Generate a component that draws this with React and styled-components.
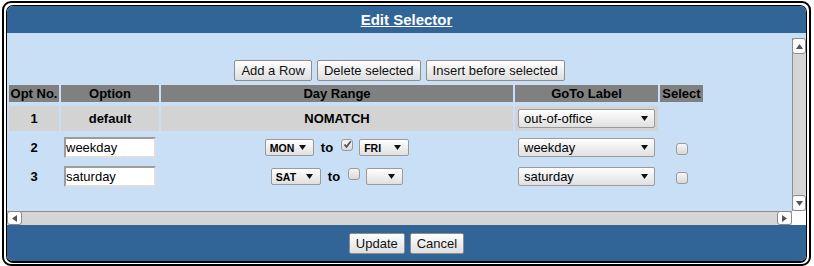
import React from "react";
import styled, { createGlobalStyle } from "styled-components";

const GlobalStyle = createGlobalStyle`
  html, body {
    margin: 0;
    padding: 0;
    background: #ffffff;
  }
  body {
    font-family: "Liberation Sans", Arial, sans-serif;
    font-size: 13px;
    color: #000;
  }
`;

const rows = [
  { no: 2, option: "weekday", from: "MON", fromW: 49, checked: true, to: "FRI", toW: 50, label: "weekday" },
  { no: 3, option: "saturday", from: "SAT", fromW: 50, checked: false, to: "", toW: 37, label: "saturday" },
];

const Arrow = ({ dir = "down" }) => {
  const pts = {
    down: "0,0 7,0 3.5,5",
    up: "0,5 7,5 3.5,0",
    left: "5,0 5,7 0,3.5",
    right: "0,0 0,7 5,3.5",
  }[dir];
  const horiz = dir === "left" || dir === "right";
  return (
    <svg width={horiz ? 5 : 7} height={horiz ? 7 : 5} viewBox={horiz ? "0 0 5 7" : "0 0 7 5"}>
      <polygon points={pts} fill="currentColor" />
    </svg>
  );
};

const CheckBox = ({ checked, raised }) => (
  <Check $raised={raised}>
    {checked && (
      <svg width="9" height="9" viewBox="0 0 9 9">
        <path d="M1.5 4.5 L3.5 6.8 L7.8 1.2" stroke="#555" strokeWidth="1.8" fill="none" />
      </svg>
    )}
  </Check>
);

const App = () => {
  return (
    <>
      <GlobalStyle />
      <Frame>
        <Panel>
          <Header>
            <Title>Edit Selector</Title>
          </Header>
          <Body>
            <ScrollArea>
              <Content>
                <ButtonBar>
                  <Button>Add a Row</Button>
                  <Button>Delete selected</Button>
                  <Button>Insert before selected</Button>
                </ButtonBar>
                <Table>
                  <thead>
                    <tr>
                      <Th $w={50}>Opt No.</Th>
                      <Th $w={98}>Option</Th>
                      <Th $w={352}>Day Range</Th>
                      <Th $w={143}>GoTo Label</Th>
                      <Th $w={43}>Select</Th>
                    </tr>
                  </thead>
                  <tbody>
                    <tr>
                      <Td $grey>1</Td>
                      <Td $grey>default</Td>
                      <Td $grey>NOMATCH</Td>
                      <Td $grey>
                        <LabelSelect>
                          <span>out-of-office</span>
                          <Arrow />
                        </LabelSelect>
                      </Td>
                      <Td />
                    </tr>
                    {rows.map((r) => (
                      <tr key={r.no}>
                        <Td>{r.no}</Td>
                        <Td>
                          <TextInput defaultValue={r.option} />
                        </Td>
                        <Td>
                          <DayRange>
                            <DaySelect style={{ width: r.fromW }}>
                              <span>{r.from}</span>
                              <Arrow />
                            </DaySelect>
                            <To>to</To>
                            <CheckBox checked={r.checked} raised />
                            <DaySelect style={{ width: r.toW }}>
                              <span>{r.to}</span>
                              <Arrow />
                            </DaySelect>
                          </DayRange>
                        </Td>
                        <Td>
                          <LabelSelect>
                            <span>{r.label}</span>
                            <Arrow />
                          </LabelSelect>
                        </Td>
                        <Td>
                          <CheckBox />
                        </Td>
                      </tr>
                    ))}
                  </tbody>
                </Table>
              </Content>
              <VBar>
                <ScrollBtn>
                  <Arrow dir="up" />
                </ScrollBtn>
                <ScrollBtn>
                  <Arrow dir="down" />
                </ScrollBtn>
              </VBar>
              <HBar>
                <ScrollBtn>
                  <Arrow dir="left" />
                </ScrollBtn>
                <ScrollBtn>
                  <Arrow dir="right" />
                </ScrollBtn>
              </HBar>
              <Corner />
            </ScrollArea>
          </Body>
          <Footer>
            <Button>Update</Button>
            <Button>Cancel</Button>
          </Footer>
        </Panel>
      </Frame>
    </>
  );
};

export default App;

const Frame = styled.div`
  margin: 1px 3px 0 2px;
  border: 2px solid #000;
  border-radius: 9px;
  padding: 2px 2px 1px 2px;
  background: #fff;
`;

const Panel = styled.div`
  border: 1px solid #000;
  border-bottom-width: 2px;
  border-radius: 7px;
  overflow: hidden;
`;

const Header = styled.div`
  height: 27px;
  background: #316497;
  display: flex;
  align-items: center;
  justify-content: center;
`;

const Title = styled.span`
  color: #fff;
  font-weight: bold;
  font-size: 15px;
  text-decoration: underline;
`;

const Body = styled.div`
  background: #c8dff6;
  padding-top: 5px;
`;

const ScrollArea = styled.div`
  display: grid;
  grid-template-columns: 1fr 14px;
  grid-template-rows: 173px 14px;
`;

const Content = styled.div`
  overflow: hidden;
  padding-top: 22px;
`;

const ButtonBar = styled.div`
  display: flex;
  justify-content: center;
  gap: 5px;
  height: 21px;
`;

const Button = styled.button`
  box-sizing: border-box;
  height: 21px;
  margin: 0;
  padding: 0 6px;
  font-family: "Liberation Sans", Arial, sans-serif;
  font-size: 13px;
  color: #111;
  background: linear-gradient(#ffffff, #dedede);
  border: 1px solid #8e8e8e;
  border-radius: 2px;
  cursor: pointer;
`;

const Table = styled.table`
  border-collapse: separate;
  border-spacing: 2px 4px;
  table-layout: fixed;
`;

const Th = styled.th`
  width: ${(p) => p.$w}px;
  height: 17px;
  padding: 0;
  background: #808080;
  font-size: 13px;
  font-weight: bold;
  color: #000;
  text-align: center;
  white-space: nowrap;
`;

const Td = styled.td`
  height: 25px;
  padding: 0;
  text-align: center;
  vertical-align: middle;
  font-weight: bold;
  white-space: nowrap;
  background: ${(p) => (p.$grey ? "#d3d3d3" : "transparent")};
`;

const TextInput = styled.input`
  box-sizing: border-box;
  display: block;
  width: 92px;
  height: 21px;
  margin: 0 0 0 3px;
  padding: 0;
  border: 2px solid;
  border-color: #9c9c9c #dedede #dedede #9c9c9c;
  background: #fff;
  font-family: "Liberation Sans", Arial, sans-serif;
  font-size: 13px;
  color: #000;
  outline: none;
`;

const SelectBase = styled.div`
  box-sizing: border-box;
  display: inline-flex;
  align-items: center;
  justify-content: space-between;
  gap: 3px;
  border: 1px solid #9a9a9a;
  border-radius: 2px;
  background: linear-gradient(#fefefe, #e0e0e0);
  color: #000;
  svg {
    color: #111;
    flex: none;
  }
`;

const LabelSelect = styled(SelectBase)`
  width: 137px;
  height: 19px;
  padding: 0 6px 0 5px;
  font-size: 13px;
  font-weight: normal;
  vertical-align: middle;
`;

const DaySelect = styled(SelectBase)`
  height: 17px;
  padding: 0 7px 0 4px;
  font-size: 10.5px;
  font-weight: bold;
`;

const DayRange = styled.div`
  display: inline-flex;
  align-items: center;
  vertical-align: middle;
`;

const To = styled.span`
  font-size: 13px;
  font-weight: bold;
  margin: 0 8px 0 7px;
`;

const Check = styled.span`
  box-sizing: border-box;
  display: inline-flex;
  align-items: center;
  justify-content: center;
  width: 12px;
  height: 12px;
  margin: ${(p) => (p.$raised ? "0 6px 6px 0" : "0")};
  border: 1px solid #9a9a9a;
  border-radius: 3px;
  background: linear-gradient(#f6f6f6, #d9d9d9);
  vertical-align: middle;
`;

const VBar = styled.div`
  display: flex;
  flex-direction: column;
  justify-content: space-between;
  background: #d5d5d5;
  border-left: 1px solid #8e8e8e;
`;

const HBar = styled.div`
  display: flex;
  justify-content: space-between;
  background: #d5d5d5;
  border-top: 1px solid #8e8e8e;
`;

const ScrollBtn = styled.div`
  box-sizing: border-box;
  display: flex;
  align-items: center;
  justify-content: center;
  width: 15px;
  min-height: 14px;
  flex: 0 0 14px;
  background: #fff;
  border: 1px solid #8a8a8a;
  border-radius: 3px;
  color: #555;

  ${VBar} & {
    width: auto;
    flex: 0 0 16px;
    margin-left: -1px;
  }

  ${HBar} & {
    flex: 0 0 15px;
    margin-top: -1px;
  }
`;

const Corner = styled.div`
  background: #fff;
`;

const Footer = styled.div`
  height: 36px;
  background: #316497;
  display: flex;
  align-items: center;
  justify-content: center;
  gap: 5px;
`;
